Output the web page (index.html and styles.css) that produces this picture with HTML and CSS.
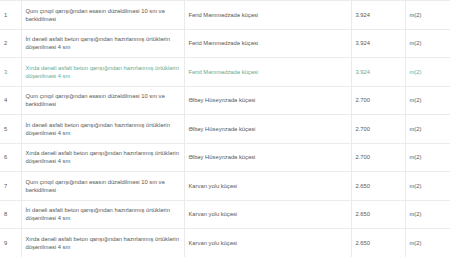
FILE: index.html
```html
<!DOCTYPE html>
<html lang="az">
<head>
<meta charset="utf-8">
<title>Cədvəl</title>
<link rel="stylesheet" href="styles.css">
</head>
<body>
<table class="works">
  <colgroup>
    <col class="c-num"><col class="c-name"><col class="c-street"><col class="c-qty"><col class="c-unit">
  </colgroup>
  <tbody>
    <tr><td>1</td><td>Qum çınqıl qarışığından əsasın düzəldilməsi 10 sm və bərkidilməsi</td><td>Fərid Məmmədzadə küçəsi</td><td>3.924</td><td>m(2)</td></tr>
    <tr><td>2</td><td>İri dənəli asfalt beton qarışığından hazırlanmış örtüklərin döşənilməsi 4 sm</td><td>Fərid Məmmədzadə küçəsi</td><td>3.924</td><td>m(2)</td></tr>
    <tr class="active"><td>3</td><td>Xırda dənəli asfalt beton qarışığından hazırlanmış örtüklərin döşənilməsi 4 sm</td><td>Fərid Məmmədzadə küçəsi</td><td>3.924</td><td>m(2)</td></tr>
    <tr><td>4</td><td>Qum çınqıl qarışığından əsasın düzəldilməsi 10 sm və bərkidilməsi</td><td>Əlbəy Hüseynzadə küçəsi</td><td>2.700</td><td>m(2)</td></tr>
    <tr><td>5</td><td>İri dənəli asfalt beton qarışığından hazırlanmış örtüklərin döşənilməsi 4 sm</td><td>Əlbəy Hüseynzadə küçəsi</td><td>2.700</td><td>m(2)</td></tr>
    <tr><td>6</td><td>Xırda dənəli asfalt beton qarışığından hazırlanmış örtüklərin döşənilməsi 4 sm</td><td>Əlbəy Hüseynzadə küçəsi</td><td>2.700</td><td>m(2)</td></tr>
    <tr><td>7</td><td>Qum çınqıl qarışığından əsasın düzəldilməsi 10 sm və bərkidilməsi</td><td>Karvan yolu küçəsi</td><td>2.650</td><td>m(2)</td></tr>
    <tr><td>8</td><td>İri dənəli asfalt beton qarışığından hazırlanmış örtüklərin döşənilməsi 4 sm</td><td>Karvan yolu küçəsi</td><td>2.650</td><td>m(2)</td></tr>
    <tr><td>9</td><td>Xırda dənəli asfalt beton qarışığından hazırlanmış örtüklərin döşənilməsi 4 sm</td><td>Karvan yolu küçəsi</td><td>2.650</td><td>m(2)</td></tr>
  </tbody>
</table>
</body>
</html>
```
FILE: styles.css
```css
html, body {
  margin: 0;
  padding: 0;
  background: #ffffff;
}
body {
  font-family: "Liberation Sans", Arial, sans-serif;
  font-size: 5.8px;
  line-height: 8px;
  color: #585858;
}
.works {
  width: 450px;
  table-layout: fixed;
  border-collapse: collapse;
}
.c-num { width: 21px; }
.c-name { width: 163px; }
.c-street { width: 167px; }
.c-qty { width: 54px; }
.c-unit { width: 45px; }
.works td {
  border: 1px solid #ebebeb;
  padding: 5.75px 4px 5.75px 4px;
  vertical-align: middle;
  text-align: left;
  height: 16px;
}
.works tr td:first-child { border-left: none; }
.works tr td:last-child { border-right: none; }
.works tr.active td { color: #6aab8f; }
```
